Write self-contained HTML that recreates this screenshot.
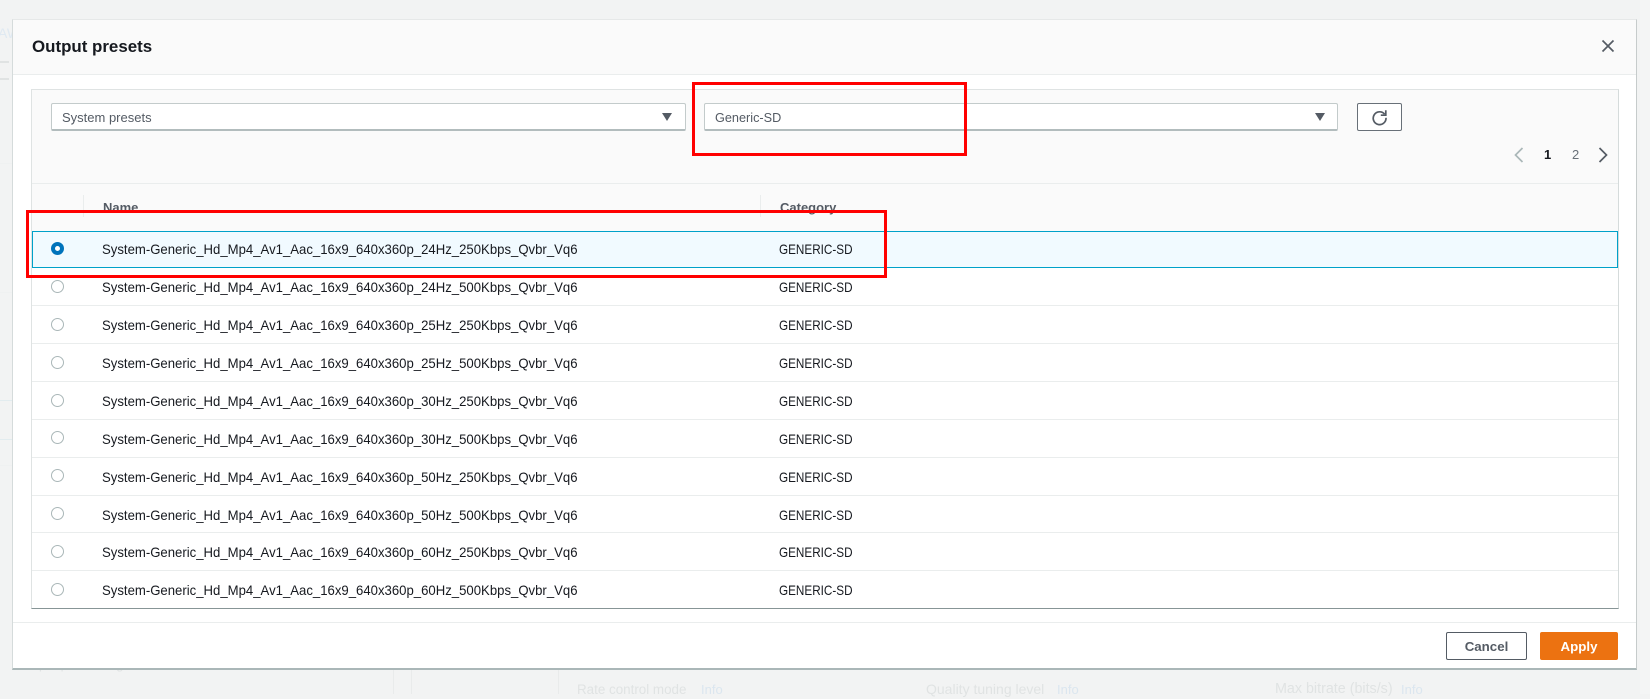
<!DOCTYPE html>
<html lang="en">
<head>
<meta charset="utf-8">
<title>Output presets</title>
<style>
html,body{margin:0;padding:0;width:1650px;height:694px;overflow:hidden;background:#f2f3f3;font-family:"Liberation Sans",sans-serif;color:#16191f}
*{box-sizing:border-box}
.a{position:absolute}
.t{position:absolute;white-space:nowrap;line-height:18px;font-size:13.4px}
.r{position:absolute;left:102px;white-space:nowrap;line-height:18px;font-size:14px;transform:scaleX(.939);transform-origin:left center}
.g{position:absolute;left:779px;white-space:nowrap;line-height:18px;font-size:14px;transform:scaleX(.837);transform-origin:left center}
.faint{color:#e0e3e3;font-size:14px}
.info{color:#dbe6ef;font-size:13px}
#modal{left:12px;top:19px;width:1625px;height:651px;background:#fff;border-right:1px solid #c6cbcb;border-left:1px solid #d5dbdb;border-bottom:2px solid #aab7b8;border-top:1px solid #e6e8e8}
#head{left:13px;top:20px;width:1623px;height:55px;background:#fafafa;border-bottom:1px solid #eaeded}
#panel{left:31px;top:89px;width:1588px;height:520px;background:#fff;border:1px solid #dfe3e3;border-right:1px solid #d5dbdb;border-bottom:1px solid #879596}
#tool{left:32px;top:90px;width:1586px;height:141px;background:#fafafa}
.sel{position:absolute;top:103px;height:28px;background:#fff;border:1px solid #c3cbcb;border-bottom:2px solid #b2bcbd;border-radius:2px}
.arr{position:absolute;width:0;height:0;border-left:5px solid transparent;border-right:5px solid transparent;border-top:8px solid #545b64}
.sep{position:absolute;left:32px;width:1586px;height:1px;background:#eaeded}
.rad{position:absolute;left:51px;width:13px;height:13px;border-radius:50%;border:1px solid #aab7b8;background:#fff}
.btn{position:absolute;top:632px;height:28px;border-radius:2px;text-align:center;line-height:27px;font-size:13.3px;font-weight:bold}
#rb1,#rb2{position:absolute;border:3px solid #ff0000}
</style>
</head>
<body>
<!-- faint background -->
<div class="t faint" style="left:-2px;top:24px;color:#dfe9f2">AW</div>
<div class="a" style="left:0;top:61px;width:9px;height:19px;border:2px solid #e0e3e3;border-right:0;border-left:0"></div>
<div class="a" style="left:0;top:163px;width:12px;height:1px;background:#eff1f1"></div>
<div class="a" style="left:0;top:292px;width:12px;height:1px;background:#eff1f1"></div>
<div class="a" style="left:0;top:400px;width:12px;height:1px;background:#e2ecef"></div>
<div class="a" style="left:0;top:439px;width:12px;height:1px;background:#e2ecef"></div>
<div class="a" style="left:0;top:465px;width:12px;height:1px;background:#eff1f1"></div>
<div class="t faint" style="left:18px;top:656px;font-size:13px">Output processing</div>
<div class="a" style="left:393px;top:670px;width:1px;height:24px;background:#e9ebeb"></div>
<div class="a" style="left:411px;top:670px;width:1px;height:24px;background:#e9ebeb"></div>
<div class="a" style="left:558px;top:670px;width:1px;height:24px;background:#e9ebeb"></div>
<div class="t faint" style="left:577px;top:681px;font-size:13.4px">Rate control mode</div>
<div class="t info" style="left:701px;top:681px">Info</div>
<div class="t faint" style="left:926px;top:680px;font-size:14px">Quality tuning level</div>
<div class="t info" style="left:1057px;top:681px">Info</div>
<div class="t faint" style="left:1275px;top:680px;font-size:14.3px">Max bitrate (bits/s)</div>
<div class="t info" style="left:1401px;top:681px">Info</div>
<div class="a" style="left:1640px;top:0;width:10px;height:694px;background:#f4f5f5"></div>

<!-- modal -->
<div class="a" id="modal"></div>
<div class="a" id="head"></div>
<div class="t" style="left:32px;top:38px;font-size:16.9px;font-weight:bold">Output presets</div>
<svg class="a" style="left:1601px;top:39px" width="14" height="14" viewBox="0 0 14 14"><path d="M1.5 1.5L12.5 12.5M12.5 1.5L1.5 12.5" stroke="#545b64" stroke-width="1.7" fill="none"/></svg>

<div class="a" id="panel"></div>
<div class="a" id="tool"></div>

<div class="sel" style="left:51px;width:635px"></div>
<div class="t" style="left:62px;top:109px;color:#545b64;font-size:13px">System presets</div>
<div class="arr" style="left:662px;top:113px"></div>

<div class="sel" style="left:704px;width:634px"></div>
<div class="t" style="left:715px;top:109px;color:#545b64;font-size:12.7px">Generic-SD</div>
<div class="arr" style="left:1315px;top:113px"></div>

<div class="a" style="left:1357px;top:103px;width:45px;height:28px;border:1px solid #687078;border-radius:2px;background:#fff"></div>
<svg class="a" style="left:1371px;top:109px" width="17" height="17" viewBox="0 0 17 17"><path d="M13.6 5.2A6.4 6.4 0 1 0 15 8.8" stroke="#545b64" stroke-width="1.7" fill="none"/><path d="M14.8 1.2V6.2H9.8" stroke="#545b64" stroke-width="1.7" fill="none"/></svg>

<svg class="a" style="left:1514px;top:147px" width="10" height="16" viewBox="0 0 10 16"><path d="M8.5 1L1.5 8L8.5 15" stroke="#aab7b8" stroke-width="1.7" fill="none"/></svg>
<div class="t" style="left:1544px;top:146px;font-size:13px;font-weight:bold">1</div>
<div class="t" style="left:1572px;top:146px;font-size:13px;color:#687078">2</div>
<svg class="a" style="left:1598px;top:147px" width="10" height="16" viewBox="0 0 10 16"><path d="M1.5 1L8.5 8L1.5 15" stroke="#545b64" stroke-width="1.7" fill="none"/></svg>

<div class="sep" style="top:183px"></div>
<div class="a" style="left:83px;top:195px;width:1px;height:22px;background:#eaeded"></div>
<div class="a" style="left:760px;top:195px;width:1px;height:22px;background:#eaeded"></div>
<div class="t" style="left:103px;top:199px;color:#545b64;font-weight:bold;font-size:13px">Name</div>
<div class="t" style="left:780px;top:199px;color:#545b64;font-weight:bold;font-size:13px">Category</div>

<!-- selected row -->
<div class="a" style="left:32px;top:231px;width:1586px;height:37px;background:#f1faff;border:1px solid #00a1c9"></div>
<div class="rad" style="top:242px;border:4px solid #0073bb"></div>
<div class="r" style="top:240px">System-Generic_Hd_Mp4_Av1_Aac_16x9_640x360p_24Hz_250Kbps_Qvbr_Vq6</div>
<div class="g" style="top:240px">GENERIC-SD</div>

<div class="rad" style="top:280px"></div>
<div class="r" style="top:278px">System-Generic_Hd_Mp4_Av1_Aac_16x9_640x360p_24Hz_500Kbps_Qvbr_Vq6</div>
<div class="g" style="top:278px">GENERIC-SD</div>
<div class="sep" style="top:305px"></div>

<div class="rad" style="top:318px"></div>
<div class="r" style="top:316px">System-Generic_Hd_Mp4_Av1_Aac_16x9_640x360p_25Hz_250Kbps_Qvbr_Vq6</div>
<div class="g" style="top:316px">GENERIC-SD</div>
<div class="sep" style="top:343px"></div>

<div class="rad" style="top:356px"></div>
<div class="r" style="top:354px">System-Generic_Hd_Mp4_Av1_Aac_16x9_640x360p_25Hz_500Kbps_Qvbr_Vq6</div>
<div class="g" style="top:354px">GENERIC-SD</div>
<div class="sep" style="top:381px"></div>

<div class="rad" style="top:394px"></div>
<div class="r" style="top:392px">System-Generic_Hd_Mp4_Av1_Aac_16x9_640x360p_30Hz_250Kbps_Qvbr_Vq6</div>
<div class="g" style="top:392px">GENERIC-SD</div>
<div class="sep" style="top:419px"></div>

<div class="rad" style="top:431px"></div>
<div class="r" style="top:430px">System-Generic_Hd_Mp4_Av1_Aac_16x9_640x360p_30Hz_500Kbps_Qvbr_Vq6</div>
<div class="g" style="top:430px">GENERIC-SD</div>
<div class="sep" style="top:457px"></div>

<div class="rad" style="top:469px"></div>
<div class="r" style="top:468px">System-Generic_Hd_Mp4_Av1_Aac_16x9_640x360p_50Hz_250Kbps_Qvbr_Vq6</div>
<div class="g" style="top:468px">GENERIC-SD</div>
<div class="sep" style="top:495px"></div>

<div class="rad" style="top:507px"></div>
<div class="r" style="top:506px">System-Generic_Hd_Mp4_Av1_Aac_16x9_640x360p_50Hz_500Kbps_Qvbr_Vq6</div>
<div class="g" style="top:506px">GENERIC-SD</div>
<div class="sep" style="top:532px"></div>

<div class="rad" style="top:545px"></div>
<div class="r" style="top:543px">System-Generic_Hd_Mp4_Av1_Aac_16x9_640x360p_60Hz_250Kbps_Qvbr_Vq6</div>
<div class="g" style="top:543px">GENERIC-SD</div>
<div class="sep" style="top:570px"></div>

<div class="rad" style="top:583px"></div>
<div class="r" style="top:581px">System-Generic_Hd_Mp4_Av1_Aac_16x9_640x360p_60Hz_500Kbps_Qvbr_Vq6</div>
<div class="g" style="top:581px">GENERIC-SD</div>

<!-- footer -->
<div class="a" style="left:13px;top:622px;width:1623px;height:1px;background:#eaeded"></div>
<div class="btn" style="left:1446px;width:81px;background:#fff;border:1px solid #545b64;color:#545b64">Cancel</div>
<div class="btn" style="left:1540px;width:78px;background:#ec7211;border:1px solid #ec7211;color:#fff">Apply</div>

<!-- red annotation boxes -->
<div id="rb1" style="left:692px;top:82px;width:275px;height:74px"></div>
<div id="rb2" style="left:26px;top:210px;width:861px;height:68px"></div>
</body>
</html>
